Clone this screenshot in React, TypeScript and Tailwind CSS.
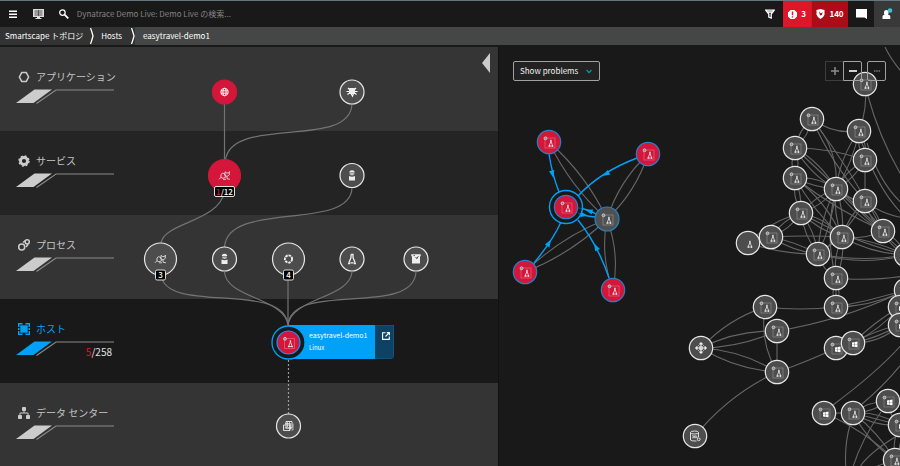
import type { ReactNode } from "react";

const FONT = "font-['Noto_Sans_CJK_JP','Noto_Sans',sans-serif]";

type Kind = "linux" | "windows" | "cluster" | "database";
type Point = { x: number; y: number };
type HostNode = Point & { kind: Kind; plain?: boolean };

const hosts: Record<string, HostNode> = {
  a: { x: 865, y: 84, kind: "linux" },
  b: { x: 812, y: 119, kind: "linux" },
  c: { x: 859, y: 131, kind: "linux" },
  d: { x: 795, y: 148, kind: "linux" },
  e: { x: 865, y: 160, kind: "linux" },
  f: { x: 795, y: 178, kind: "linux" },
  g: { x: 836, y: 189, kind: "linux" },
  h: { x: 865, y: 201, kind: "linux" },
  i: { x: 801, y: 213, kind: "linux" },
  j: { x: 883, y: 231, kind: "linux" },
  k: { x: 748, y: 243, kind: "linux", plain: true },
  l: { x: 771, y: 237, kind: "linux" },
  m: { x: 842, y: 237, kind: "linux" },
  n: { x: 818, y: 254, kind: "linux" },
  o: { x: 906, y: 255, kind: "linux" },
  p: { x: 836, y: 278, kind: "linux" },
  q: { x: 836, y: 307, kind: "linux" },
  r: { x: 906, y: 290, kind: "linux" },
  s: { x: 900, y: 307, kind: "windows" },
  t: { x: 900, y: 325, kind: "windows" },
  u: { x: 765, y: 307, kind: "linux" },
  v: { x: 777, y: 331, kind: "linux" },
  w: { x: 777, y: 372, kind: "linux" },
  x: { x: 836, y: 348, kind: "windows" },
  y: { x: 853, y: 343, kind: "windows" },
  z: { x: 824, y: 413, kind: "windows" },
  A: { x: 853, y: 413, kind: "linux" },
  B: { x: 888, y: 401, kind: "windows" },
  C: { x: 900, y: 425, kind: "windows" },
  D: { x: 895, y: 460, kind: "linux" },
  E: { x: 701, y: 348, kind: "cluster" },
  F: { x: 695, y: 436, kind: "database" },
};

/* from, to, bend of the curve away from the straight line */
const links: [string, string, number][] = [
  ["a", "c", -3], ["b", "c", 5], ["b", "d", 3], ["b", "d", -3], ["b", "g", -8], ["b", "j", -3],
  ["b", "h", 4], ["d", "e", -3], ["d", "g", 4], ["d", "g", -4], ["d", "j", 0], ["d", "f", 3], ["d", "f", -3],
  ["f", "g", 2], ["f", "g", -4], ["f", "i", 3], ["f", "i", -2], ["f", "j", 3], ["f", "m", -5], ["f", "m", 3],
  ["c", "e", 3], ["c", "e", -3], ["c", "g", 4], ["c", "g", -3], ["e", "g", 3], ["e", "g", -3], ["e", "h", 0],
  ["g", "h", 3], ["g", "j", 4], ["g", "j", -4], ["g", "i", 3], ["g", "i", -3], ["g", "m", 3], ["g", "m", -3],
  ["g", "n", 4], ["g", "n", -3], ["g", "o", 0], ["g", "p", 6], ["h", "j", 3], ["h", "j", -3], ["h", "m", 3],
  ["h", "n", -4], ["i", "l", 3], ["i", "l", -3], ["i", "k", 4], ["i", "m", 3], ["i", "m", -4], ["i", "n", 3],
  ["i", "n", -3], ["i", "o", 4], ["l", "n", 3], ["l", "n", -2], ["l", "m", -1], ["k", "n", 3], ["k", "l", 0],
  ["m", "j", 3], ["m", "n", 0], ["m", "p", 3], ["m", "p", -3], ["m", "o", 4], ["m", "o", -3],
  ["n", "p", 3], ["n", "o", 4], ["n", "o", 6], ["p", "q", 3], ["p", "q", 0], ["p", "q", -3],
  ["q", "r", 1], ["q", "r", 4], ["j", "o", 3], ["j", "o", -3], ["u", "q", 2], ["v", "r", 5], ["w", "x", 1],
  ["u", "w", 6], ["v", "w", 0], ["E", "u", -5], ["E", "v", -5], ["E", "v", 4], ["E", "w", -5], ["E", "w", 5],
  ["w", "F", 6], ["y", "s", 3], ["y", "s", -2], ["y", "t", 2], ["y", "t", -2], ["y", "t", 5], ["z", "A", 0],
  ["z", "D", -4], ["A", "B", 3], ["A", "B", -3], ["A", "C", 4], ["A", "C", 0], ["A", "C", -4], ["A", "D", 4],
  ["A", "D", -3], ["B", "C", 3], ["C", "D", 3], ["C", "D", -3],
];

/* links that run to hosts outside the visible part of the canvas */
const openLinks = [
  "M885 47Q891 60 905 76",
  "M868 96Q880 140 904 180",
  "M867 143Q880 185 904 205",
  "M862 143Q878 190 904 216",
  "M875 208Q890 216 904 218",
  "M848 279Q880 280 904 276",
  "M833 405Q880 370 904 342",
  "M862 404Q885 385 904 361",
  "M850 425Q844 446 846 470",
  "M881 412Q861 440 852 470",
  "M895 437Q866 455 858 470",
  "M870 470Q880 463 904 459",
];

function curve(a: Point, b: Point, bend: number) {
  const dx = b.x - a.x;
  const dy = b.y - a.y;
  const len = Math.hypot(dx, dy) || 1;
  const cx = (a.x + b.x) / 2 - (dy / len) * bend * 2;
  const cy = (a.y + b.y) / 2 + (dx / len) * bend * 2;
  return `M${a.x} ${a.y}Q${cx} ${cy} ${b.x} ${b.y}`;
}

function LinuxGlyph({ plain }: { plain?: boolean }) {
  return (
    <g fill="none" stroke="#fff">
      {!plain && <rect x="-4" y="-4" width="10" height="10" strokeWidth=".7" strokeOpacity=".35" />}
      {!plain && <circle cx="-3.5" cy="-3.7" r="1.4" fill="#888" stroke="#ccc" strokeWidth="1" />}
      <path d="M1.700-2.200V0L0 4H3.800L2.200 0V-2.200" strokeWidth=".8" strokeOpacity=".9" />
      <path d="M-.5 4.200H.8M3 4.200H4.300" strokeWidth="1" />
    </g>
  );
}

function WindowsGlyph() {
  return (
    <g>
      <rect x="-4" y="-4" width="10" height="10" fill="none" stroke="#fff" strokeWidth=".7" strokeOpacity=".3" />
      <circle cx="-3.5" cy="-3.5" r="1.4" fill="#888" stroke="#ccc" strokeWidth="1" />
      <path d="M-1-.6L1.500-1V1.200H-1ZM1.900-1.100L4.500-1.500V1.200H1.900ZM-1 1.600H1.500V3.900L-1 3.500ZM1.900 1.600H4.500V4.300L1.900 4Z" fill="#fff" />
    </g>
  );
}

function ClusterGlyph() {
  return (
    <g fill="none" stroke="#eee" strokeWidth="1.1">
      <path d="M-1.500-3.500L0-5L1.500-3.500M3.500-1.500L5 0L3.500 1.500M1.500 3.500L0 5L-1.500 3.500M-3.500 1.500L-5 0L-3.500-1.500" strokeWidth="1.500" />
      <path d="M-4.500 0H4.500M0-4.500V4.500" />
      <circle r="1.2" fill="#555" />
      <path d="M-3-3L3 3M3-3L-3 3" strokeWidth=".6" />
    </g>
  );
}

function DatabaseGlyph() {
  return (
    <g fill="none" stroke="#eee" strokeWidth=".9">
      <ellipse cx="-.5" cy="-3.5" rx="4" ry="1.5" />
      <path d="M-4.5-3.5V4Q-3 5.3 1.5 5M3.5-3.5V1" />
      <path d="M-3-.2h1.6v2h-1.6M-.6-.2h1.4v2H-.6ZM1.7-.4v2.2h1.2" strokeWidth=".7" />
      <circle cx="3.7" cy="3.3" r="1.4" />
    </g>
  );
}

function GlobeGlyph() {
  return (
    <g fill="none" stroke="#fff" strokeWidth=".9">
      <circle r="3.7" />
      <ellipse rx="1.6" ry="3.7" />
      <path d="M-3.7-1.2H3.7M-3.7 1.2H3.7" />
    </g>
  );
}

function SyntheticGlyph() {
  return (
    <g stroke="#fff" fill="none">
      <path d="M-2.500-3.500H2.500V1.500H-2.500Z" fill="#eee" strokeWidth=".8" />
      <path d="M-5.500-.5H-3M3-.5H5.500M-4.500 2.500L-2.500 1M2.500 1L4.500 2.500M-1 1.500L.5 4.200L1.500 1.500M4-4L2.500-2.500M-4-4L-2.500-2.500" strokeWidth="1.1" />
    </g>
  );
}

function TomcatGlyph() {
  return (
    <g fill="none" stroke="#eee" strokeWidth=".8">
      <path d="M-5.500 3.800L-3.600 1.800Q-4.200-1.800-2-2.300L0-1.800L1 1.800L-1.500 2.800M-3.600 1.800L-1.500 2.800" />
      <path d="M.5-3.800L2-2.500H4L5-4M.6-3.600L.4-.4L2.500 1L4.800-.7V-3.800M2.500 1V3.200L5.500 3.800M-1.500 3.800H1.500" />
    </g>
  );
}

function PersonGlyph() {
  return (
    <g fill="#eee">
      <path d="M-2.600-4Q0-6.400 2.600-4V-3H-2.600Z" />
      <path d="M-2.300-2.500H2.300V-1Q0 .8-2.300-1Z" fill="#bbb" />
      <path d="M-3 .4Q0 2 3 .4V5H-3Z" />
    </g>
  );
}

function RingGlyph() {
  return <circle r="3.6" fill="none" stroke="#eee" strokeWidth="1.9" strokeDasharray="2.5 .8" />;
}

function TuxGlyph() {
  return (
    <g fill="none" stroke="#eee" strokeWidth="1.3">
      <path d="M-1-4.5H1V-1.5L3 3.5M-1-4.5V-1.5L-3 3.5M-1.6 3.8H1.6" />
      <path d="M-4 4.3H-1.8M1.8 4.3H4" strokeWidth="1.7" />
    </g>
  );
}

function BoxGlyph() {
  return (
    <g>
      <path d="M-4.7-4.7H4.7V-2.7H4V4.5H-4V-2.7H-4.7Z" fill="#eee" />
      <path d="M-2.5-3.4H-1M-.3-2L.8-.2L2.3-2.8" stroke="#555" strokeWidth="1" fill="none" />
    </g>
  );
}

function DatacenterGlyph() {
  return (
    <g fill="none" stroke="#eee" strokeWidth=".9">
      <path d="M-2.5-4.5H3.5V2H-2.5ZM-5-1H1.5V4.5H-5Z" />
      <path d="M4.5-2.5V4H3M-3.5-2.5H2V3M-4 2H3M-1-4V1M1-4V4" strokeOpacity=".75" />
    </g>
  );
}

function Bubble({
  x,
  y,
  r = 12,
  fill = "#4d4d4d",
  stroke = "#e8e8e8",
  children,
}: Point & { r?: number; fill?: string; stroke?: string; children?: ReactNode }) {
  return (
    <g transform={`translate(${x} ${y})`}>
      <circle r={r} fill={fill} stroke={stroke} strokeWidth="1.2" />
      {children}
    </g>
  );
}

function Badge({ x, y, w, children }: Point & { w: number; children: ReactNode }) {
  return (
    <g>
      <rect x={x - w / 2} y={y - 5} width={w} height="10" rx="1.5" fill="#000" stroke="#ddd" strokeWidth="1" />
      <text x={x} y={y + 3} textAnchor="middle" fill="#fff" fontSize="8" fontWeight="500">
        {children}
      </text>
    </g>
  );
}

function Arrow({ x, y, angle }: Point & { angle: number }) {
  return <path transform={`translate(${x} ${y}) rotate(${angle})`} d="M4 0L-3.5-2.7V2.7Z" fill="#00a1f7" />;
}

function LayerIcon({ name }: { name: string }) {
  return (
    <svg className="h-3 w-3 overflow-visible" viewBox="-6 -6 12 12" aria-hidden="true">
      {name === "apps" && <path d="M-2.3-4.400H2.300L4.600 0L2.300 4.400H-2.300L-4.600 0Z" fill="none" stroke="#ccc" strokeWidth="1.500" />}
      {name === "services" && (
        <g fill="none" stroke="#ccc">
          <circle r="3.5" strokeWidth="2.8" />
          <circle r="5" strokeWidth="1.4" strokeDasharray="2 1.93" />
        </g>
      )}
      {name === "processes" && (
        <g fill="none" stroke="#ccc" strokeWidth="1.5">
          <circle cx="-2.3" cy="2" r="3" />
          <circle cx="3.2" cy="-3.2" r="2.1" />
          <path d="M-1-2.5L1.5-4.5M2 2L4.2-.8" />
        </g>
      )}
      {name === "hosts" && (
        <g fill="none" stroke="#00a1f7" strokeWidth="1.4">
          <rect x="-3" y="-3" width="6" height="6" fill="#00a1f7" />
          <path d="M-5.3-2V-5.3H-1.5M1.5-5.3H5.3V-2M5.3 2V5.3H1.5M-1.5 5.3H-5.3V2M-5.3-1V1M5.3-1V1" />
        </g>
      )}
      {name === "datacenters" && (
        <g fill="#ccc">
          <rect x="-2" y="-6" width="4" height="4" rx=".8" />
          <rect x="-6" y="2" width="4" height="4" rx=".8" />
          <rect x="2" y="2" width="4" height="4" rx=".8" />
          <path d="M0-2V0M-4 2V0H4V2" fill="none" stroke="#ccc" />
        </g>
      )}
    </svg>
  );
}

const layers = [
  { id: "apps", label: "アプリケーション", bg: "bg-[#353535]" },
  { id: "services", label: "サービス", bg: "bg-[#242424]" },
  { id: "processes", label: "プロセス", bg: "bg-[#343434]" },
  { id: "hosts", label: "ホスト", bg: "bg-[#191919]" },
  { id: "datacenters", label: "データ センター", bg: "bg-[#343434]" },
];

function Layer({ id, label, bg }: { id: string; label: string; bg: string }) {
  const active = id === "hosts";
  return (
    <section className={`h-[84px] shrink-0 pl-4 pt-[22px] ${bg}`}>
      <button type="button" className={`block w-[98px] text-left ${active ? "text-[#00a1f7]" : "text-[#c4c4c4]"}`}>
        <span className="flex h-4 items-center gap-[6px] pl-[2px] text-[10px] leading-4 whitespace-nowrap">
          <LayerIcon name={id} />
          {label}
        </span>
        <svg className="mt-1 block h-[15px] w-[98px]" viewBox="0 0 98 15" aria-hidden="true">
          <path d="M0 14L18.500 .5H36L17.500 14Z" fill={active ? "#00a1f7" : "#ccc"} />
          <path d="M20.500 14.500L40 1H98" fill="none" stroke="#8a8a8a" strokeWidth="1.2" />
        </svg>
      </button>
      {active && (
        <p className="-mt-3 w-24 text-right text-[10px] leading-4 text-[#e0e0e0]">
          <span className="text-[#dc172a]">5</span>/258
        </p>
      )}
    </section>
  );
}

function TopologyTree() {
  return (
    <main className="relative flex flex-col overflow-hidden border-r border-[#111] bg-[#343434]">
      {layers.map((layer) => (
        <Layer key={layer.id} {...layer} />
      ))}
      <button type="button" aria-label="Collapse" className="absolute top-[6px] right-2 h-5 w-2">
        <svg className="h-5 w-2" viewBox="0 0 8 20">
          <path d="M8 0V20L0 10Z" fill="#ccc" />
        </svg>
      </button>
      <div className="absolute top-[278px] left-[288px] flex h-[34px] overflow-hidden rounded-br">
        <div className="w-[87px] bg-[#00a1f7] pl-[21px] text-white">
          <p className="pt-1 text-[7px] leading-3 whitespace-nowrap">easytravel-demo1</p>
          <p className="text-[6px] leading-[14px]">Linux</p>
        </div>
        <button type="button" aria-label="Open host" className="flex w-[19px] justify-center border border-l-0 border-[#12527c] bg-[#0d4264] pt-[6px] pl-[3px]">
          <svg className="h-2 w-2" viewBox="0 0 8 8" fill="none" stroke="#fff" strokeWidth="1.100">
            <path d="M3.500 .8H.6V7.400H7.300V4.600M4.800 .6H7.400V3.200M7.300 .7L3.500 4.500" />
          </svg>
        </button>
      </div>
      <svg className="pointer-events-none absolute inset-0 h-full w-full" aria-hidden="true">
        <g transform="translate(0 -47)">
          <g fill="none" stroke="#737373" strokeWidth="1.200">
            <path d="M224.500 104V160" />
            <path d="M352 104C350 150 231 115 225.500 160" />
            <path d="M224.500 191C220 222 164 222 161 243" />
            <path d="M352 188C350 232 228 200 224.500 247" />
            <path d="M161 275C166 315 284 280 288 325" />
            <path d="M224.500 272C226 298 285 298 288 325" />
            <path d="M288 276V325" />
            <path d="M352 272C350 298 291 298 288 325" />
            <path d="M416 272C413 318 292 280 288 325" />
            <path d="M288.500 360V414" stroke="#999" strokeDasharray="2 2" />
          </g>
          <Bubble x={224.5} y={92} fill="#d3163a" stroke="#d3163a"><GlobeGlyph /></Bubble>
          <Bubble x={352} y={92}><SyntheticGlyph /></Bubble>
          <Bubble x={224.5} y={175.5} r={16} fill="#d3163a" stroke="#d3163a"><TomcatGlyph /></Bubble>
          <Bubble x={352} y={175.5}><PersonGlyph /></Bubble>
          <Bubble x={160.5} y={259} r={16}><TomcatGlyph /></Bubble>
          <Bubble x={224.5} y={259}><PersonGlyph /></Bubble>
          <Bubble x={288.5} y={259} r={16}><RingGlyph /></Bubble>
          <Bubble x={352} y={259}><TuxGlyph /></Bubble>
          <Bubble x={416} y={259}><BoxGlyph /></Bubble>
          <Badge x={224.5} y={191.5} w={20}><tspan fill="#dc172a">1</tspan>/12</Badge>
          <Badge x={160.5} y={275} w={10}>3</Badge>
          <Badge x={288.5} y={275} w={10}>4</Badge>
          <circle cx="288.500" cy="342.500" r="16.500" fill="#191919" stroke="#00a1f7" strokeWidth="1.300" />
          <Bubble x={288.5} y={342.5} r={11.5} fill="#d3163a" stroke="#1496ff"><LinuxGlyph /></Bubble>
          <Bubble x={288.5} y={426}><DatacenterGlyph /></Bubble>
        </g>
      </svg>
    </main>
  );
}

const problemHosts: Point[] = [
  { x: 549, y: 142 },
  { x: 648, y: 154 },
  { x: 525, y: 272 },
  { x: 613, y: 290 },
];

function HostGraph() {
  const hub = { x: 607, y: 219 };
  return (
    <aside className="relative overflow-hidden bg-[#191919]">
      <svg className="absolute inset-0 h-full w-full" role="img" aria-label="Host connections">
        <g transform="translate(-499 -47)">
          <g fill="none" stroke="#666" strokeWidth="1.100">
            {links.map(([from, to, bend], n) => (
              <path key={n} d={curve(hosts[from], hosts[to], bend)} />
            ))}
            {openLinks.map((d) => (
              <path key={d} d={d} />
            ))}
            {problemHosts.map((p) => (
              <g key={p.x}>
                <path d={curve(p, hub, 5)} />
                <path d={curve(p, hub, -5)} />
              </g>
            ))}
          </g>
          <g fill="none" stroke="#00a1f7" strokeWidth="1.400">
            <path d="M549 154Q552 174 559 192" />
            <path d="M637 158Q600 172 578 196" />
            <path d="M534 263Q553 240 561 222" />
            <path d="M609 278Q598 245 578 220" />
            <path d="M596 214Q588 209 578 208" />
            <path d="M578 213Q588 217 597 217" />
          </g>
          <Arrow x={552.5} y={174} angle={76} />
          <Arrow x={606} y={174} angle={149} />
          <Arrow x={549} y={243} angle={-58} />
          <Arrow x={596} y={247} angle={-117} />
          <Arrow x={589} y={211} angle={197} />
          <Arrow x={584} y={215} angle={12} />
          <circle cx="566" cy="207" r="16.500" fill="#191919" fillOpacity=".7" stroke="#00a1f7" strokeWidth="1.400" />
          {[...problemHosts, { x: 566, y: 207 }].map((p) => (
            <Bubble key={p.x} {...p} r={11.7} fill="#d3163a" stroke="#2483c6"><LinuxGlyph /></Bubble>
          ))}
          <Bubble {...hub} fill="#505050" stroke="#2483c6"><LinuxGlyph /></Bubble>
          {Object.entries(hosts).map(([id, h]) => (
            <Bubble key={id} x={h.x} y={h.y} r={11.7}>
              {h.kind === "linux" && <LinuxGlyph plain={h.plain} />}
              {h.kind === "windows" && <WindowsGlyph />}
              {h.kind === "cluster" && <ClusterGlyph />}
              {h.kind === "database" && <DatabaseGlyph />}
            </Bubble>
          ))}
        </g>
      </svg>
      <div className="relative flex items-start justify-between px-[14px] pt-[14px]">
        <div className="relative">
          <select aria-label="Filter" className="block h-5 w-[87px] appearance-none rounded-xs border border-[#a0a0a0] bg-[#222] pl-[6px] text-[8px] leading-4 text-[#f2f2f2]">
            <option>Show problems</option>
          </select>
          <svg className="pointer-events-none absolute top-2 right-2 h-[5px] w-[6px]" viewBox="0 0 6 5" fill="none" stroke="#00a1b2" strokeWidth="1.200" aria-hidden="true">
            <path d="M.6 1L3 3.600L5.400 1" />
          </svg>
        </div>
        <div className="flex text-white">
          <button type="button" aria-label="Zoom in" className="flex h-5 w-[18px] items-center justify-center border border-r-0 border-[#3d3d3d]">
            <svg className="h-2 w-2" viewBox="0 0 8 8" stroke="#8c8c8c" strokeWidth="1.500"><path d="M0 4H8M4 0V8" /></svg>
          </button>
          <button type="button" aria-label="Zoom out" className="flex h-5 w-[19px] items-center justify-center rounded-r-xs border border-[#a0a0a0]">
            <svg className="h-2 w-2" viewBox="0 0 8 8" stroke="#fff" strokeWidth="1.600"><path d="M0 4H8" /></svg>
          </button>
          <button type="button" aria-label="More" className="ml-[5px] flex h-5 w-[19px] items-center justify-center rounded-xs border border-[#a0a0a0]">
            <svg className="h-2 w-2" viewBox="0 0 8 8" stroke="#aaa" strokeWidth="1.200"><path d="M1 4H2.500M3.300 4H4.800M5.600 4H7.100" /></svg>
          </button>
        </div>
      </div>
    </aside>
  );
}

function Header() {
  return (
    <header className="flex h-[27px] shrink-0 items-stretch border-t border-[#64777f] bg-[#191919] text-white">
      <button type="button" aria-label="Menu" className="flex w-[26px] items-center justify-center">
        <svg className="h-2 w-2" viewBox="0 0 8 8" stroke="#fff" strokeWidth="1.400"><path d="M0 1.200H8M0 4.200H8M0 7.200H8" /></svg>
      </button>
      <button type="button" aria-label="Dashboards" className="flex w-6 items-center justify-center">
        <svg className="h-[10px] w-[11px]" viewBox="0 0 11 10">
          <path d="M0 0H11V8H7V9H8.500V10H2.500V9H4V8H0Z" fill="#ddd" />
          <path d="M1.500 2H5M6 2H9.500M1.500 4H5M6 4H9.500M1.500 6H5M6 6H9.500M5.500 1V7" stroke="#333" strokeWidth=".8" />
        </svg>
      </button>
      <label className="flex flex-1 items-center pl-[9px]">
        <svg className="h-[10px] w-[10px]" viewBox="0 0 10 10" fill="none" stroke="#fff" aria-hidden="true">
          <circle cx="3.500" cy="3.500" r="2.800" strokeWidth="1.300" />
          <path d="M5.700 5.700L9.500 9.500" strokeWidth="1.800" />
        </svg>
        <input
          type="text"
          aria-label="Search"
          placeholder="Dynatrace Demo Live: Demo Live の検索..."
          className="ml-2 w-full bg-transparent text-[8px] leading-4 text-white outline-none placeholder:text-[#848484]"
        />
      </label>
      <button type="button" aria-label="Filter" className="flex w-[27px] items-center justify-center">
        <svg className="h-[10px] w-[10px]" viewBox="0 0 10 10" fill="none" stroke="#fff" strokeWidth="1.300"><path d="M.8 1.200H9.200L6.200 5V9L3.800 8V5ZM2.500 3H7.500" /></svg>
      </button>
      <button type="button" className="flex w-7 items-center justify-center gap-1 bg-[#dc172a] text-[8px] font-bold">
        <svg className="h-[9px] w-[9px]" viewBox="0 0 9 9"><path d="M2.600 0H6.400L9 2.600V6.400L6.400 9H2.600L0 6.400V2.600Z" fill="#fff" /><path d="M4.500 1.500V5.300M4.500 6.200V7.600" stroke="#dc172a" strokeWidth="1.400" /></svg>
        3
      </button>
      <button type="button" className="flex w-[37px] items-center justify-center gap-1 border-l border-[#c41c2c] bg-[#ab0c17] text-[8px] font-bold">
        <svg className="h-[10px] w-[9px]" viewBox="0 0 9 10"><path d="M.5 1L4.500 0L8.500 1V5.500Q8 8 4.500 10Q1 8 .5 5.500Z" fill="#fff" /><path d="M3 2.500L5 4.500L6.500 2.800L6 6L4 6.500Z" fill="#ab0c17" /></svg>
        140
      </button>
      <button type="button" aria-label="Chat" className="flex w-[26px] items-center justify-center">
        <svg className="h-[10px] w-[11px]" viewBox="0 0 11 10"><path d="M0 0H11V10L8.500 8.500H0Z" fill="#fff" /></svg>
      </button>
      <button type="button" aria-label="Account" className="flex w-[26px] items-center justify-center bg-[#393939]">
        <svg className="h-3 w-3" viewBox="0 0 12 12">
          <path d="M1.500 11V8.500Q1.500 7 3.500 6.700Q2.800 5.500 3 4Q3.300 2 5.300 2Q7.300 2 7.600 4Q7.700 5.500 7 6.700Q9.300 7 9.300 8.500V11Z" fill="#fff" />
          <circle cx="9" cy="2.500" r="2.300" fill="#36c5d6" />
        </svg>
      </button>
    </header>
  );
}

function Chevron() {
  return (
    <svg className="h-4 w-1 shrink-0" viewBox="0 0 4 16" fill="none" stroke="#fff" strokeWidth="1.300" aria-hidden="true">
      <path d="M.5 0Q2 4 3 8Q2 12 .5 16" />
    </svg>
  );
}

export default function App() {
  return (
    <div className={`flex min-h-screen flex-col bg-[#191919] ${FONT}`}>
      <Header />
      <nav aria-label="Breadcrumb" className="flex h-[18px] shrink-0 items-stretch bg-[#454746] text-[8px] leading-4 whitespace-nowrap text-white">
        <div className="flex items-center gap-[7px] bg-[#333] pl-[5px]">
          <a href="#smartscape">Smartscape トポロジ</a>
          <Chevron />
          <a href="#hosts" className="pr-[2px]">Hosts</a>
          <Chevron />
        </div>
        <a href="#host" aria-current="page" className="flex items-center pl-2">easytravel-demo1</a>
      </nav>
      <div className="grid grow grid-cols-[499fr_401fr] border-t-2 border-[#191919]">
        <TopologyTree />
        <HostGraph />
      </div>
    </div>
  );
}
